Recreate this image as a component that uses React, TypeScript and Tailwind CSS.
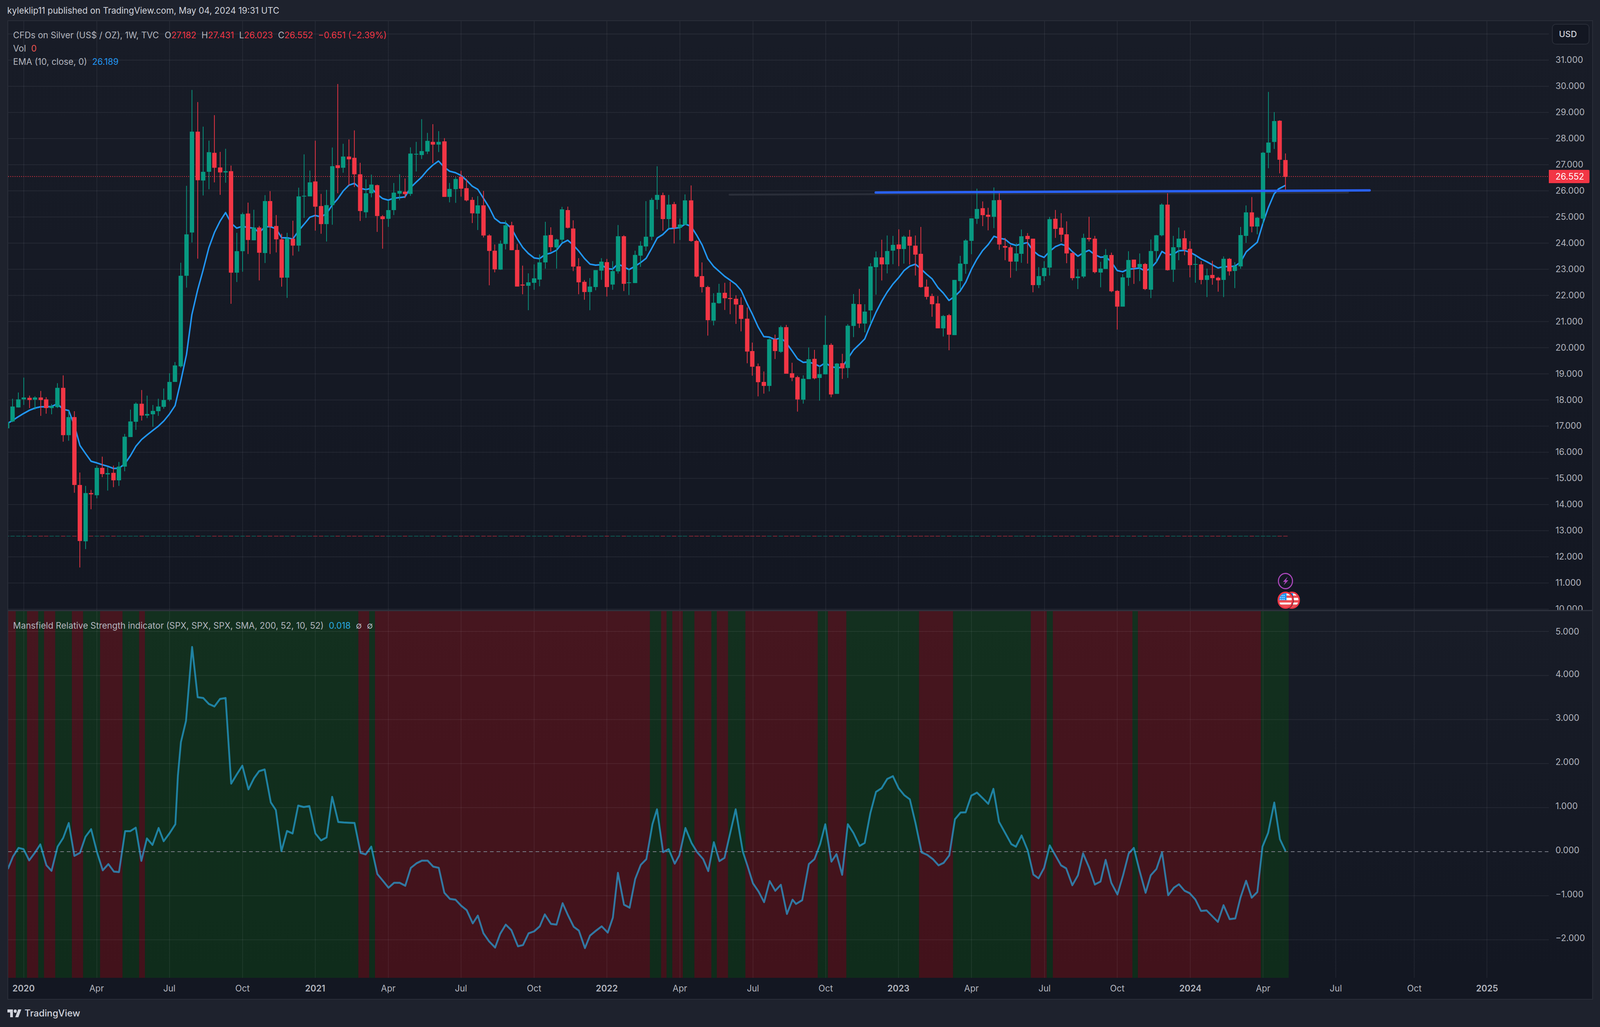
import React from "react";

type C = [number, number, number, number, number, number];
type P = [number, number];

const GREEN = "#089981";
const RED = "#f23645";

// candle data: [x, up(1)/down(0), high, bodyTop, bodyBottom, low]
const seg1: C[] = [
[27,1,1103,1105,1125,1125],[48,1,1030,1055,1103,1105],[71,1,1010,1032,1058,1058],[93,1,962,1026,1032,1050],[115,0,1020,1027,1034,1060],[137,1,1022,1026,1033,1065],[159,0,1005,1026,1034,1085],[181,0,1025,1032,1060,1078],[203,1,1047,1054,1060,1080],[225,1,980,995,1057,1060],[248,0,955,995,1147,1168],[270,1,1068,1089,1147,1165],[292,0,1070,1089,1307,1332],[314,0,1267,1307,1487,1572],[336,1,1310,1333,1488,1513],[358,0,1323,1333,1337,1385],[380,1,1245,1252,1340,1350],[402,0,1216,1252,1272,1282],[424,1,1250,1269,1273,1325],[446,0,1245,1268,1292,1314],[468,1,1233,1248,1292,1310],[490,1,1143,1152,1248,1263],[513,1,1065,1103,1153,1153],[535,1,1042,1046,1104,1130],[557,0,1002,1046,1084,1100],[579,1,1020,1079,1084,1092],[601,1,1050,1069,1080,1120],[623,1,1030,1055,1070,1085],[645,1,997,1034,1056,1062],[667,1,948,976,1033,1038],[689,1,912,923,976,976],[711,1,593,635,926,930],[734,1,346,502,635,673],[755,1,38,172,496,528],[778,0,77,172,328,580],[799,1,156,301,329,377],[822,1,201,238,301,357],[844,0,119,240,288,335],[866,0,237,287,303,375],[888,1,227,299,303,336],[910,0,281,299,625,725],[932,1,497,556,625,655],[955,1,432,437,556,622],[976,0,400,435,520,565],[999,1,423,480,521,521],[1020,0,475,480,561,650],[1043,1,376,395,562,594],[1064,0,363,395,477,565],[1087,0,440,475,518,560],[1109,0,500,518,641,670],[1131,1,497,515,641,706],[1153,0,458,516,538,570],[1176,1,352,380,538,557],[1197,1,245,378,380,449],[1220,1,297,335,380,380],[1241,0,201,332,413,490],[1264,0,372,411,469,500],[1286,1,359,408,469,525],[1308,1,223,283,408,471],[1330,0,19,280,289,370],[1352,1,211,252,288,304],[1374,0,197,252,261,345],[1396,0,168,256,309,350],[1418,0,272,309,427,459],[1441,1,325,370,431,449],[1463,1,310,342,370,383],[1485,0,342,344,443,494],[1507,0,440,444,453,548],[1529,1,395,424,452,478],[1551,1,337,368,424,440],
];
const seg2: C[] = [
[5,1,386,453,464,490],[27,0,403,456,466,482],[49,1,278,303,465,473],[71,1,256,304,307,375],[93,1,165,293,309,325],[115,1,220,252,295,305],[137,0,185,256,267,342],[159,1,213,256,267,297],[182,0,241,254,477,477],[203,1,421,445,477,499],[226,1,397,405,446,501],[248,0,372,396,444,476],[270,0,405,442,491,495],[292,0,478,489,543,582],[314,1,474,511,544,610],[336,0,453,511,632,640],[359,0,627,632,694,832],[380,0,668,693,768,780],[403,1,652,665,769,770],[424,1,572,591,666,688],[447,0,577,591,691,691],[469,0,666,690,837,837],[491,0,753,829,833,868],[513,1,784,820,834,932],[536,1,748,804,822,850],[557,1,708,740,809,836],[580,1,577,632,740,765],[601,0,599,630,679,697],[624,1,645,648,680,765],[646,1,517,527,649,660],[668,0,516,530,601,604],[690,0,571,604,757,775],[712,0,723,756,820,868],[734,0,811,818,859,890],[756,1,803,837,859,932],[778,1,771,771,839,852],[801,1,723,737,773,810],[822,0,726,739,839,877],[845,1,735,775,829,850],[866,1,590,635,776,785],[889,0,631,635,826,855],[910,1,765,820,823,871],[933,1,693,710,823,823],[955,1,655,673,713,758],[977,1,494,637,676,694],[999,1,481,489,637,651],[1021,1,354,469,489,527],[1043,0,460,470,566,613],[1066,1,469,508,566,605],[1087,0,497,506,601,664],[1110,1,564,588,601,650],[1131,1,467,491,589,590],[1154,0,431,491,654,657],[1176,0,650,654,797,800],[1198,0,740,795,839,861],[1220,0,834,839,972,1034],[1243,1,864,902,974,993],[1264,1,826,862,904,906],[1287,0,822,862,884,931],[1308,0,818,883,887,948],[1331,0,872,886,909,987],[1352,0,880,911,967,1017],[1375,0,921,966,1098,1145],[1396,0,1062,1096,1159,1195],[1419,0,1146,1157,1221,1278],[1441,0,1178,1220,1236,1267],[1463,1,1045,1049,1236,1258],[1485,0,1030,1049,1096,1128],[1508,1,994,1000,1099,1103],[1529,0,991,1000,1187,1187],[1552,0,1143,1185,1203,1217],
];
const seg3: C[] = [
[5,0,1200,1207,1319,1380],[24,1,1198,1215,1320,1340],[42,1,1058,1117,1217,1217],[61,0,1070,1115,1213,1218],[79,1,1150,1192,1211,1325],[98,1,898,1045,1193,1193],[117,0,1037,1045,1294,1308],[136,1,1136,1139,1291,1291],[154,0,1090,1137,1163,1216],[173,1,941,949,1161,1211],[192,1,790,839,950,1006],[211,0,764,841,938,960],[229,1,841,878,938,982],[248,1,635,651,872,940],[267,1,576,606,655,793],[286,0,517,606,641,722],[304,1,496,574,641,686],[323,1,498,543,572,640],[342,0,465,541,564,650],[360,1,496,502,564,637],[379,0,468,502,547,642],[398,0,496,547,592,697],[416,0,453,588,755,758],[435,0,717,753,804,817],[454,0,788,800,841,904],[473,0,800,837,962,962],[491,1,895,900,962,1003],[510,0,890,896,994,1072],[528,1,719,719,996,996],[547,1,598,637,725,770],[566,1,515,521,639,688],[585,1,410,410,523,590],[603,1,261,363,412,438],[622,0,325,359,394,449],[641,0,357,392,402,470],[660,1,255,319,402,459],[678,0,284,318,541,568],[697,0,508,549,557,620],[715,0,545,555,627,708],[734,1,535,586,627,674],[752,1,466,500,588,633],[772,0,484,498,514,637],[790,0,512,512,745,781],[809,1,655,700,745,760],[827,1,625,659,700,725],[846,1,403,414,657,697],[865,0,368,412,463,508],[884,0,384,457,492,528],[902,0,425,490,586,635],[921,0,578,584,710,721],[940,1,665,702,710,765],[959,1,487,508,702,710],[977,0,402,508,515,526],[996,0,498,512,680,686],[1015,1,628,662,682,756],[1033,1,564,594,664,664],[1052,0,582,594,776,781],[1071,0,770,774,853,968],[1089,1,690,706,853,853],[1108,1,575,619,708,749],[1127,0,617,617,657,739],[1146,1,586,639,655,725],[1164,0,634,639,765,770],[1183,1,516,574,768,810],[1201,1,493,495,574,632],[1220,1,335,341,495,500],[1239,0,284,341,670,672],[1258,1,498,555,668,729],[1276,1,456,512,555,620],[1295,0,471,510,567,595],[1313,0,524,563,645,706],[1332,1,600,639,642,733],[1351,0,625,641,719,741],[1370,1,662,696,719,805],[1388,0,623,694,710,743],[1407,0,703,708,721,778],[1426,1,601,613,719,805],[1445,0,609,613,676,697],[1463,1,630,650,674,760],[1482,1,453,494,651,663],[1501,1,345,380,498,533],[1520,0,303,380,451,480],[1538,1,403,407,451,490],
];
const seg4: C[] = [
[139,1,1017,1022,1463,1500],[162,1,615,954,1022,1126],[187,1,750,810,950,997],[210,0,805,808,1069,1160],[235,0,1027,1071,1184,1272],
];

const tx = (xo: number, xs: number, yo: number, ys: number) => (c: C): C => [Math.round(xo + c[0] / xs), c[1], yo + c[2] / ys, yo + c[3] / ys, yo + c[4] / ys, yo + c[5] / ys];
const candles: C[] = [
  ...seg1.map(tx(0, 1.42545, 200, 1.2544)),
  ...seg2.map(tx(1100, 1.42545, 200, 1.568)),
  ...seg3.map(tx(2200, 1.20615, 350, 1.96)),
  ...seg4.map(tx(3400, 1.5342, 0, 2.6133)),
];

const ema1: P[] = [[27,1110],[48,1100],[71,1088],[93,1077],[115,1067],[137,1060],[159,1056],[181,1056],[203,1055],[225,1046],[248,1064],[270,1068],[292,1115],[314,1180],[336,1206],[358,1231],[380,1236],[402,1242],[424,1247],[446,1254],[468,1253],[490,1240],[513,1213],[535,1182],[557,1161],[579,1146],[601,1132],[623,1118],[645,1101],[667,1079],[689,1052],[711,975],[734,888],[755,760],[778,680],[799,618],[822,545],[844,496],[866,460],[888,432],[910,466],[932,482],[955,476],[976,480],[999,482],[1020,496],[1043,478],[1064,477],[1087,484],[1109,513],[1131,513],[1153,517],[1176,490],[1197,470],[1220,447],[1241,441],[1264,446],[1286,435],[1308,408],[1330,388],[1352,362],[1374,344],[1396,338],[1418,354],[1441,358],[1463,354],[1485,373],[1507,387],[1529,392],[1551,386]];
const ema2: P[] = [[5,480],[27,477],[49,440],[71,418],[93,397],[115,370],[137,349],[159,333],[182,358],[203,374],[226,380],[248,391],[270,411],[292,434],[314,447],[336,482],[359,520],[380,563],[403,581],[424,582],[447,604],[469,645],[491,680],[513,704],[536,722],[557,725],[580,708],[601,703],[624,691],[646,663],[668,651],[690,670],[712,695],[734,724],[756,747],[778,751],[801,749],[822,765],[845,767],[866,746],[889,758],[910,769],[933,756],[955,741],[977,724],[999,684],[1021,642],[1043,628],[1066,605],[1087,603],[1110,600],[1131,586],[1154,595],[1176,630],[1198,670],[1220,725],[1243,756],[1264,775],[1287,796],[1308,811],[1331,828],[1352,853],[1375,905],[1396,948],[1419,1000],[1441,1038],[1463,1040],[1485,1050],[1508,1043],[1529,1062],[1552,1095]];
const ema3: P[] = [[5,1115],[24,1133],[42,1131],[61,1140],[79,1153],[98,1135],[117,1155],[136,1160],[154,1158],[173,1113],[192,1070],[211,1043],[229,1015],[248,945],[267,880],[286,825],[304,780],[323,740],[342,708],[360,672],[379,650],[398,640],[416,663],[435,690],[454,714],[473,757],[491,785],[510,822],[528,803],[547,775],[566,730],[585,665],[603,615],[622,572],[641,541],[660,500],[678,510],[697,515],[715,537],[734,546],[752,538],[772,532],[790,572],[809,595],[827,606],[846,575],[865,552],[884,540],[902,548],[921,577],[940,600],[959,582],[977,570],[996,592],[1015,605],[1033,603],[1052,630],[1071,672],[1089,678],[1108,665],[1127,663],[1146,659],[1164,675],[1183,660],[1201,630],[1220,576],[1239,593],[1258,590],[1276,573],[1295,571],[1313,580],[1332,595],[1351,614],[1370,628],[1388,643],[1407,659],[1426,652],[1445,652],[1463,650],[1482,630],[1501,578],[1520,553],[1538,530]];
const ema4: P[] = [[139,1495],[162,1390],[187,1297],[205,1265],[235,1240]];
const pts = (xo: number, xs: number, yo: number, ys: number, a: P[]) => a.map((p) => `${(xo + p[0] / xs).toFixed(1)},${(yo + p[1] / ys).toFixed(1)}`).join(" ");
const emaLine = [
  pts(0, 1.42545, 200, 1.2544, ema1),
  pts(1100, 1.42545, 200, 1.568, ema2),
  pts(2200, 1.20615, 350, 1.96, ema3),
  pts(3400, 1.5342, 0, 2.6133, ema4),
].join(" ");

const osc1: P[] = [[15,1075],[25,1025],[36,990],[46,995],[57,1040],[68,1010],[79,976],[91,1060],[101,1082],[113,985],[124,950],[135,890],[146,1022],[157,1010],[168,945],[179,915],[191,1010],[202,1080],[213,1055],[224,1085],[234,1087],[246,923],[256,923],[267,909],[278,1042],[289,952],[300,978],[312,910],[322,963],[334,930],[345,895],[350,700],[356,565],[366,480],[378,183],[389,385],[400,388],[411,412],[422,422],[433,392],[444,388],[455,732],[466,695],[477,660],[489,755],[500,710],[510,682],[521,675],[533,807],[543,838],[554,1003],[565,922],[576,932],[587,820],[598,826],[609,822],[621,932],[632,960],[643,948],[654,785],[666,886],[677,888],[688,889],[698,890],[710,1010],[720,1016],[731,985],[743,1095],[754,1122],[765,1150],[776,1130],[787,1130],[798,1142],[809,1070],[820,1052],[831,1041],[842,1041],[853,1065],[864,1070],[875,1170],[886,1195],[897,1198],[908,1222],[919,1240],[931,1293],[941,1262],[952,1333],[963,1365],[975,1390],[985,1335],[996,1298],[1007,1320],[1020,1385],[1030,1380],[1041,1333],[1052,1325],[1063,1305],[1073,1257],[1085,1295],[1096,1298],[1108,1212],[1119,1262],[1130,1307],[1140,1322],[1152,1392],[1162,1342],[1174,1322],[1185,1305],[1197,1330],[1207,1270],[1217,1090],[1229,1218],[1240,1230],[1251,1115],[1262,1058],[1273,1035],[1285,895],[1294,835],[1306,1007],[1317,995],[1329,1053],[1338,1020],[1350,910],[1362,970],[1373,1007],[1385,1035],[1395,1083],[1406,967],[1417,1043],[1427,1030],[1449,835],[1463,1005],[1472,1060],[1483,1132],[1494,1165],[1505,1208],[1516,1123],[1527,1162],[1538,1138],[1550,1255],[1561,1198]];
const osc2: P[] = [[0,1215],[12,1200],[25,1055],[36,1035],[47,975],[57,895],[69,1045],[79,1015],[90,1098],[101,895],[112,930],[124,982],[134,970],[145,850],[156,765],[167,750],[178,713],[189,702],[200,750],[211,778],[222,795],[233,890],[245,1008],[256,1018],[267,1035],[278,1060],[288,1050],[299,1020],[310,875],[321,848],[331,847],[342,780],[353,768],[364,790],[375,813],[385,753],[396,885],[408,930],[420,975],[429,985],[440,940],[452,1000],[463,1097],[473,1112],[484,1070],[495,980],[506,1020],[517,1060],[527,1072],[539,1140],[550,1100],[560,1012],[572,1070],[583,1137],[594,1125],[604,1038],[615,1130],[627,1177],[638,1100],[649,1012],[659,990],[670,1080],[682,1170],[692,1100],[703,1075],[714,1008],[726,1180],[737,1150],[747,1136],[758,1162],[768,1172],[779,1197],[790,1243],[801,1241],[823,1287],[834,1220],[846,1276],[857,1273],[867,1190],[878,1122],[889,1190],[900,1167],[910,985],[921,930],[933,808],[944,955],[955,1003]];
const oscLine = [pts(0, 0.7127, 1540, 1.568, osc1), pts(2200, 0.7057, 1540, 1.568, osc2)].join(" ");

// alternating shaded bands: starts red; edges in reference px
const edges = [21,43,74,105,121,152,198,229,276,338,384,400,990,1020,1036,1796,1827,1842,1858,1887,1919,1966,1981,2012,2060,2260,2288,2339,2540,2634,2849,2893,2910,3130,3145,3485,3562];

const vLines = [65,267,468,670,871,1073,1274,1476,1677,1879,2081,2282,2483,2685,2887,3088,3290,3491,3692,3909,4110];
const priceGrid = Array.from({ length: 23 }, (_, i) => 10 + i);
const priceY = (p: number) => 488.7 - (p - 26) * 66.95;
const oscY = (v: number) => 2181 - 112.8 * v;

const priceLabels = ["31.000","30.000","29.000","28.000","27.000","26.000","25.000","24.000","23.000","22.000","21.000","20.000","19.000","18.000","17.000","16.000","15.000","14.000","13.000","12.000","11.000","10.000"];
const oscLabels = ["4.000","3.000","2.000","1.000","0.000","\u22121.000","\u22122.000"];
const timeLabels: [string, number, boolean][] = [["2020",65,true],["Apr",267,false],["Jul",468,false],["Oct",670,false],["2021",871,true],["Apr",1073,false],["Jul",1274,false],["Oct",1476,false],["2022",1677,true],["Apr",1879,false],["Jul",2081,false],["Oct",2282,false],["2023",2483,true],["Apr",2685,false],["Jul",2887,false],["Oct",3088,false],["2024",3290,true],["Apr",3491,false],["Jul",3692,false],["Oct",3909,false],["2025",4110,true]];

const GRID = "rgba(240,243,250,0.07)";

function Flag({ cx, cy, id }: { cx: number; cy: number; id: string }) {
  return (
    <g>
      <clipPath id={id}><circle cx={cx} cy={cy} r={18} /></clipPath>
      <g clipPath={`url(#${id})`}>
        <rect x={cx - 18} y={cy - 18} width={36} height={36} fill="#ffffff" />
        <rect x={cx - 18} y={cy - 12} width={36} height={6} fill="#ef4f53" />
        <rect x={cx - 18} y={cy} width={36} height={6} fill="#ef4f53" />
        <rect x={cx - 18} y={cy + 11} width={36} height={8} fill="#ef4f53" />
        <rect x={cx - 18} y={cy - 18} width={21} height={18} fill="#2196f3" />
        {[-14, -9, -4].map((dx) => [-12, -7, -2].map((dy) => (
          <circle key={`${dx}${dy}`} cx={cx + dx} cy={cy + dy} r={1.3} fill="#ffffff" />
        )))}
      </g>
      <circle cx={cx} cy={cy} r={20} fill="none" stroke={RED} strokeWidth={4} />
    </g>
  );
}

function TopPlot() {
  return (
    <svg viewBox="22 54 4260 1508" preserveAspectRatio="none" className="block w-full h-full">
      {vLines.map((x) => <rect key={x} x={x - 1} y={54} width={2} height={1508} fill={GRID} />)}
      {priceGrid.map((p) => <rect key={p} x={22} y={priceY(p) - 1} width={4260} height={2} fill={GRID} />)}
      <line x1={22} x2={4282} y1={452} y2={452} stroke={RED} strokeWidth={2} strokeDasharray="2 4" />
      {candles.map((c, i) => (
        <rect key={i} x={c[0] - 6} y={1372} width={12} height={2} fill={c[1] ? GREEN : RED} opacity={0.5} />
      ))}
      <line x1={2016} y1={498.5} x2={3726} y2={493} stroke="#2a2e39" strokeWidth={5} strokeLinecap="round" />
      <polyline points={emaLine} fill="none" stroke="#2196f3" strokeWidth={4} strokeLinejoin="round" />
      {candles.map((c, i) => {
        const col = c[1] ? GREEN : RED;
        return (
          <g key={i} fill={col}>
            <rect x={c[0] - 1} y={c[2]} width={2} height={c[5] - c[2]} />
            <rect x={c[0] - 6} y={c[3]} width={12} height={Math.max(2, c[4] - c[3])} />
          </g>
        );
      })}
      <line x1={2420} y1={493} x2={3786} y2={487.5} stroke="#2962ff" strokeWidth={6} strokeLinecap="round" />
      <circle cx={3553} cy={1488} r={19.5} fill="none" stroke="#ab47bc" strokeWidth={3} />
      <path d="M3559 1477 L3546 1490 L3552.5 1490 L3548 1499 L3561 1486 L3554.5 1486 Z" fill="#ab47bc" />
      <Flag cx={3571} cy={1537} id="flagBack" />
      <circle cx={3553} cy={1537} r={23} fill="#131722" />
      <Flag cx={3553} cy={1537} id="flagFront" />
    </svg>
  );
}

function BottomPlot() {
  return (
    <svg viewBox="22 1565 4260 939" preserveAspectRatio="none" className="block w-full h-full">
      {edges.slice(0, -1).map((x, i) => (
        <rect key={x} x={x} y={1565} width={edges[i + 1] - x} height={939} fill={i % 2 === 0 ? "rgba(255,0,0,0.2)" : "rgba(0,128,0,0.2)"} />
      ))}
      {vLines.map((x) => <rect key={x} x={x - 1} y={1565} width={2} height={939} fill={GRID} />)}
      {[5, 4, 3, 2, 1, -1, -2].map((v) => <rect key={v} x={22} y={oscY(v) - 1} width={4260} height={2} fill={GRID} />)}
      <line x1={22} x2={4282} y1={2181} y2={2181} stroke="#787b86" strokeWidth={2} strokeDasharray="10 8" />
      <polyline points={oscLine} fill="none" stroke="rgba(41,182,246,0.62)" strokeWidth={5} strokeLinejoin="round" />
    </svg>
  );
}

export default function App() {
  const font = { fontFamily: "Inter, 'Liberation Sans', sans-serif" };
  return (
    <div className="w-full h-[2630px] bg-[#1e222d] flex flex-col text-[#b2b5be] overflow-hidden" style={font}>
      <header className="h-[52px] pl-[0.452vw] flex items-center text-[0.543vw] leading-none text-[#d1d4dc] pt-[2px]">
        kyleklip11 published on TradingView.com, May 04, 2024 19:31 UTC
      </header>
      <main className="mx-[0.452vw] h-[2508px] border-2 border-[#2a2e39] flex flex-col">
        <section className="h-[1508px] flex bg-linear-to-b from-[#181c27] to-[#131722] overflow-hidden">
          <div className="relative flex-1 min-w-0 h-full">
            <TopPlot />
            <div className="absolute left-[0.32vw] top-[19px] flex flex-col text-[0.543vw] leading-[34px] whitespace-nowrap">
              <div className="flex">
                <span>CFDs on Silver (US$ / OZ), 1W, TVC</span>
                <span className="ml-[0.36vw]">O<span className="text-[#f23645]">27.182</span></span>
                <span className="ml-[0.32vw]">H<span className="text-[#f23645]">27.431</span></span>
                <span className="ml-[0.32vw]">L<span className="text-[#f23645]">26.023</span></span>
                <span className="ml-[0.32vw]">C<span className="text-[#f23645]">26.552</span></span>
                <span className="ml-[0.32vw] text-[#f23645]">−0.651 (−2.39%)</span>
              </div>
              <div className="flex"><span>Vol</span><span className="ml-[0.32vw] text-[#ef5350]">0</span></div>
              <div className="flex"><span>EMA (10, close, 0)</span><span className="ml-[0.32vw] text-[#2196f3]">26.189</span></div>
            </div>
          </div>
          <div className="relative w-[2.69vw] h-full flex flex-col pl-[0.407vw] pt-[66px] text-[0.543vw] leading-none">
            {priceLabels.map((l) => (
              <div key={l} className="h-[66.95px] shrink-0 flex items-center">{l}</div>
            ))}
            <div className="absolute left-[0.18vw] top-[7px] w-[2.35vw] h-[53px] rounded-[10px] border-2 border-[#2a2e39] bg-[#131722] flex items-center pl-[0.4vw] text-[#d1d4dc] text-[0.53vw] font-medium">USD</div>
            <div className="absolute left-0 top-[381px] w-[2.53vw] h-[34px] rounded-r-[3px] bg-[#f23645] text-white flex items-center pl-[0.407vw]">26.552</div>
          </div>
        </section>
        <div className="h-[3px] bg-[#2f333e]" />
        <section className="h-[939px] flex bg-linear-to-b from-[#181c27] to-[#131722] overflow-hidden">
          <div className="relative flex-1 min-w-0 h-full">
            <BottomPlot />
            <div className="absolute left-[0.32vw] top-[20px] flex items-center text-[0.543vw] leading-[34px] whitespace-nowrap">
              <span>Mansfield Relative Strength indicator (SPX, SPX, SPX, SMA, 200, 52, 10, 52)</span>
              <span className="ml-[0.32vw] text-[#29abe2]">0.018</span>
              <span className="ml-[0.32vw]">∅</span>
              <span className="ml-[0.32vw]">∅</span>
            </div>
          </div>
          <div className="w-[2.69vw] h-full flex flex-col pl-[0.407vw] text-[0.543vw] leading-none">
            <div className="h-[104.4px] shrink-0 flex items-center">5.000</div>
            {oscLabels.map((l) => (
              <div key={l} className="h-[112.8px] shrink-0 flex items-center">{l}</div>
            ))}
          </div>
        </section>
        <footer className="h-[54px] bg-[#131722] flex items-center text-[0.543vw] leading-none">
          <span className="shrink-0" style={{ width: `${(timeLabels[0][1] - 22) / 44.22}vw` }} />
          {timeLabels.map(([t, x, bold], i) => {
            const next = i === timeLabels.length - 1 ? x + 100 : timeLabels[i + 1][1];
            return (
              <span key={t + x} className="shrink-0" style={{ width: `${(next - x) / 44.22}vw` }}>
                <span className={bold ? "inline-block -translate-x-1/2 font-semibold" : "inline-block -translate-x-1/2"}>{t}</span>
              </span>
            );
          })}
        </footer>
      </main>
      <footer className="flex-1 pl-[0.452vw] flex items-center gap-[0.2vw] text-[#d1d4dc] -mt-[1px]">
        <svg viewBox="0 4 36 18" preserveAspectRatio="none" className="w-[0.88vw] h-[20px]" fill="#d1d4dc">
          <path d="M14 22H7V11H0V4h14v18zM28 22h-8l7.5-18h8L28 22z" />
          <circle cx="20" cy="8" r="4" />
        </svg>
        <span className="text-[0.58vw] leading-none font-medium">TradingView</span>
      </footer>
    </div>
  );
}
